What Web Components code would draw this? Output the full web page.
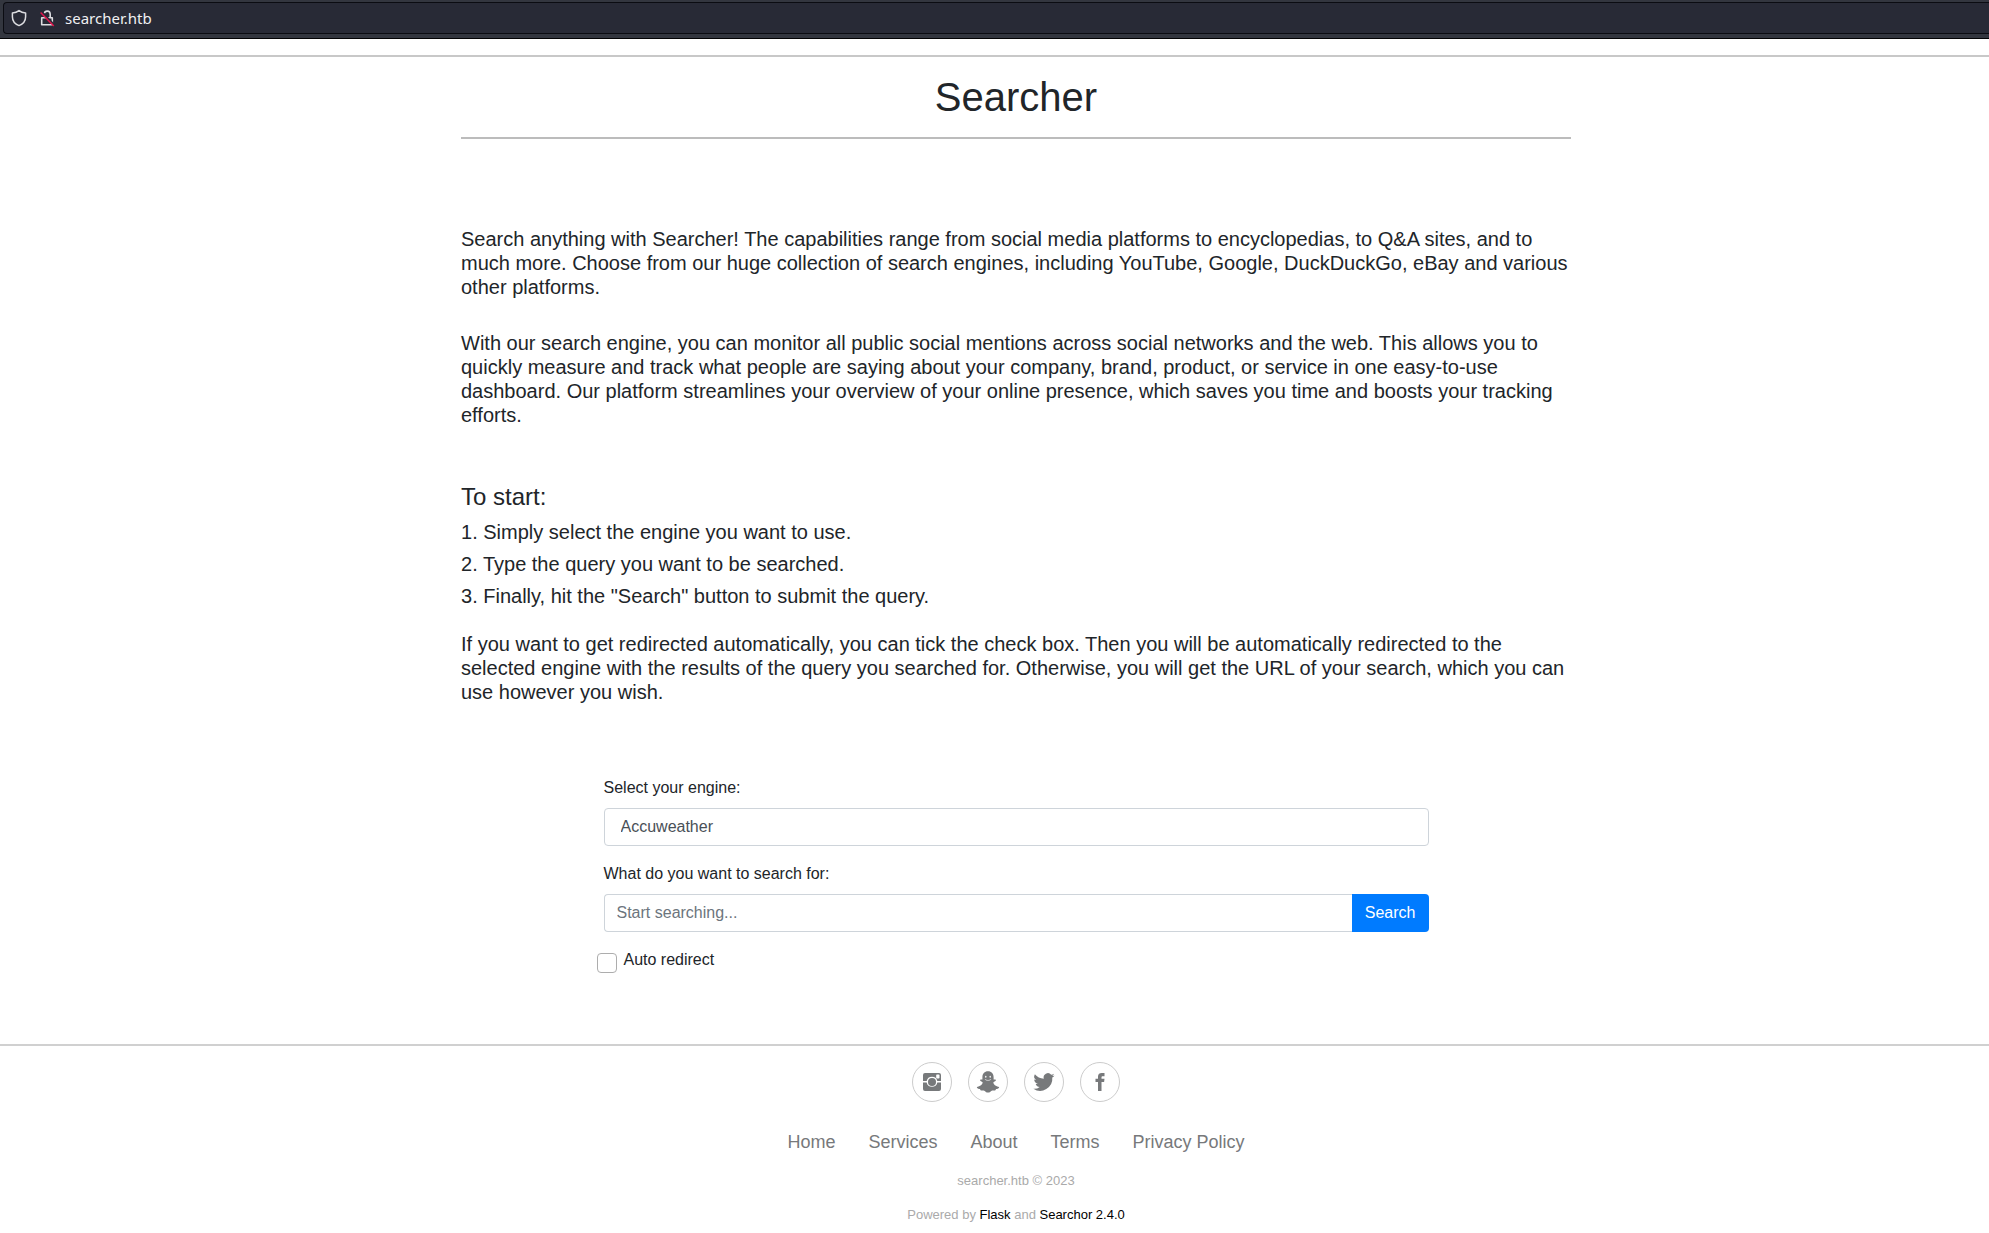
<!DOCTYPE html>
<html lang="en">
<head>
<meta charset="utf-8">
<title>Searcher</title>
<style>
  body { margin: 0; background: #fff; color: #212529; font: 16px/24px "Liberation Sans", Arial, sans-serif; }
</style>
</head>
<body>
<searcher-app></searcher-app>
<script>
class BaseElement extends HTMLElement {
  connectedCallback() {
    if (!this.shadowRoot) this.attachShadow({ mode: 'open' }).innerHTML =
      '<style>*{box-sizing:border-box}</style>' + this.render();
  }
}

customElements.define('address-bar', class extends BaseElement {
  render() { return `
    <style>
      :host { display: block; padding: 2px 0 4px 3px; background: #33363f; border-bottom: 1px solid #020204; }
      .field { display: flex; align-items: center; height: 32px; padding-left: 6px; background: #282a36;
        border: 1px solid #0b0c12; border-right: 0; border-radius: 4px 0 0 4px; }
      svg { flex: none; margin-right: 12px; }
      svg + svg { margin-right: 10px; }
      input { flex: 1; min-width: 0; padding: 0; border: 0; outline: 0; background: none; color: #f0f0f2;
        font: 15px/20px "Noto Sans", sans-serif; }
    </style>
    <div class="field">
      <svg width="18" height="18" viewBox="0 0 18 18" fill="none" stroke="#dcdce0" stroke-width="1.5" stroke-linejoin="round"><path d="M9 1.600C7.200 3 5 3.800 2.400 4v3.700c0 4 2.400 7.200 6.600 8.900 4.200-1.700 6.600-4.900 6.600-8.900V4C13 3.800 10.800 3 9 1.600z"/></svg>
      <svg width="15" height="18" viewBox="0 0 15 18" fill="none"><path d="M1.700 8.800h10.600v7H1.700zM10.200 8.500V5a3 3 0 0 0-5.900-.6" stroke="#dcdce0" stroke-width="1.600" stroke-linejoin="round"/><path d="M1.500 2.500l13 13.500" stroke="#282a36" stroke-width="1.800"/><path d="M.6 3.400l13.200 13.600" stroke="#e2134b" stroke-width="1.500"/></svg>
      <input type="text" value="searcher.htb" aria-label="Address">
    </div>`; }
});

customElements.define('intro-text', class extends BaseElement {
  render() { return `
    <style>
      :host { display: block; font-size: 20px; line-height: 24px; }
      h1 { margin: 0; padding: 16px 0; text-align: center; font-size: 40px; line-height: 48px; font-weight: 400;
        border-bottom: 2px solid #bcbcbc; }
      p { margin: 0 0 32px; }
      h1 + p { margin-top: 88px; }
      h2 { margin: 55px 0 9px; font-size: 24px; line-height: 29px; font-weight: 400; }
      ol { margin: 0 0 24px; padding: 0; display: grid; gap: 8px; counter-reset: step; }
      li { display: block; counter-increment: step; }
      li::before { content: counter(step) ". "; }
      p:last-child { margin: 0; }
    </style>
    <h1>Searcher</h1>
    <p>Search anything with Searcher! The capabilities range from social media platforms to encyclopedias, to Q&amp;A sites, and to much more. Choose from our huge collection of search engines, including YouTube, Google, DuckDuckGo, eBay and various other platforms.</p>
    <p>With our search engine, you can monitor all public social mentions across social networks and the web. This allows you to quickly measure and track what people are saying about your company, brand, product, or service in one easy-to-use dashboard. Our platform streamlines your overview of your online presence, which saves you time and boosts your tracking efforts.</p>
    <h2>To start:</h2>
    <ol>
      <li>Simply select the engine you want to use.</li>
      <li>Type the query you want to be searched.</li>
      <li>Finally, hit the "Search" button to submit the query.</li>
    </ol>
    <p>If you want to get redirected automatically, you can tick the check box. Then you will be automatically redirected to the selected engine with the results of the query you searched for. Otherwise, you will get the URL of your search, which you can use however you wish.</p>`; }
});

customElements.define('search-form', class extends BaseElement {
  render() { return `
    <style>
      :host { display: block; max-width: 825px; margin: 72px auto 0; }
      label { display: block; }
      select, input[type=text] { height: 38px; font: inherit; background: #fff; border: 1px solid #ced4da;
        border-radius: 4px; outline: 0; appearance: none; }
      select { display: block; width: 100%; margin: 8px 0 16px; padding: 0 16px; color: #495057; }
      input[type=text] { flex: 1; min-width: 0; padding: 0 12px; border-right: 0; border-radius: 4px 0 0 4px; color: #495057; }
      input::placeholder { color: #6c757d; opacity: 1; }
      .group { display: flex; margin: 8px 0 16px; }
      button { height: 38px; padding: 0 13px; border: 0; border-radius: 0 4px 4px 0; background: #007bff; color: #fff; font: inherit; }
      .check { display: flex; align-items: flex-start; gap: 7px; margin-left: -7px; }
      input[type=checkbox] { appearance: none; width: 20px; height: 20px; margin: 5px 0 0; background: #fff;
        border: 1px solid #adadad; border-radius: 4px; }
    </style>
    <form onsubmit="return false">
      <label for="engine">Select your engine:</label>
      <select id="engine"><option>Accuweather</option></select>
      <label for="query">What do you want to search for:</label>
      <div class="group"><input type="text" id="query" placeholder="Start searching..."><button>Search</button></div>
      <div class="check"><input type="checkbox" id="auto"><label for="auto">Auto redirect</label></div>
    </form>`; }
});

customElements.define('social-link', class extends BaseElement {
  render() { return `
    <style>
      :host { display: block; }
      a { display: grid; place-items: center; width: 40px; height: 40px; border: 1px solid #ccc; border-radius: 50%; color: #77797b; }
    </style>
    <a href="#" aria-label="${this.getAttribute('name')}"><slot></slot></a>`; }
});

customElements.define('site-footer', class extends BaseElement {
  render() { return `
    <style>
      :host { display: block; padding-top: 16px; text-align: center; }
      .social { display: flex; justify-content: center; gap: 16px; }
      svg { display: block; fill: #77797b; }
      nav { display: flex; justify-content: center; gap: 33px; margin: 27px 0 15px; font-size: 18px; line-height: 27px; }
      a { color: #77797b; text-decoration: none; }
      p { margin: 0 0 14px; font-size: 13px; line-height: 20px; color: #aaa; }
      p:last-child { margin: 0; }
      p a { color: #000; }
    </style>
    <div class="social">
      <social-link name="Instagram"><svg width="24" height="24" viewBox="0 0 24 24"><path fill-rule="evenodd" d="M5 3h14a2 2 0 0 1 2 2v6h-3.700a5.400 5.400 0 0 0-10.600 0H3V5a2 2 0 0 1 2-2zm12 1.500a.8.800 0 0 0-.8.800v2.400c0 .4.400.8.800.8h1.700c.4 0 .8-.4.800-.8V5.300a.8.800 0 0 0-.8-.8zM3 12.500h3.700a5.400 5.400 0 0 0 10.600 0H21V19a2 2 0 0 1-2 2H5a2 2 0 0 1-2-2z"/><circle cx="12" cy="12" r="4"/></svg></social-link>
      <social-link name="Snapchat"><svg width="24" height="24" viewBox="0 0 24 24"><path fill-rule="evenodd" d="M12 1.300c-3.500 0-5.600 2.500-5.600 5.700v2.400c-.8.300-2-.2-2.300.6-.3 1 1.800 1.400 2.500 2.300.3 1.900-2.600 4.300-5.800 4.600.2 1.500 1.800 1.900 3.200 2.100.3.700.3 1.400 1.100 1.500 1.100.2 2-.3 3.200.2 1.100.6 1.900 1.900 3.700 1.900s2.600-1.300 3.700-1.900c1.200-.5 2.100 0 3.200-.2.800-.1.800-.8 1.100-1.500 1.400-.2 3-.6 3.200-2.100-3.200-.3-6.100-2.700-5.800-4.600.7-.9 2.800-1.300 2.500-2.300-.3-.8-1.500-.3-2.300-.6V7c0-3.200-2.100-5.700-5.600-5.700zM9.800 5.700a.7 1 0 1 1 0 2 .7 1 0 0 1 0-2zm4.400 0a.7 1 0 1 1 0 2 .7 1 0 0 1 0-2zM8.700 8.900c2 1.500 4.600 1.500 6.600 0-.8 2.200-5.800 2.200-6.600 0z"/></svg></social-link>
      <social-link name="Twitter"><svg width="24" height="24" viewBox="0 0 24 24"><path d="M22.500 5.400c-.8.300-1.600.6-2.500.7.900-.5 1.600-1.400 1.900-2.400-.8.500-1.800.9-2.700 1a4.300 4.300 0 0 0-7.400 4C8.200 8.500 5 6.800 2.900 4.200a4.300 4.300 0 0 0 1.300 5.800c-.7 0-1.400-.2-2-.5 0 2.100 1.500 3.900 3.500 4.300-.6.200-1.300.2-2 .1.600 1.700 2.200 3 4 3A8.700 8.700 0 0 1 1.400 18.700 12.200 12.200 0 0 0 20.300 7.600c.9-.6 1.600-1.400 2.200-2.200z"/></svg></social-link>
      <social-link name="Facebook"><svg width="24" height="24" viewBox="0 0 24 24"><path d="M10 21v-9H7.500V8.700H10V6.500C10 4 11.600 3 13.700 3H16.500v3.200h-1.800c-.9 0-1.200.4-1.200 1.100v1.400h3l-.4 3.300h-2.600v9z"/></svg></social-link>
    </div>
    <nav><a href="#">Home</a><a href="#">Services</a><a href="#">About</a><a href="#">Terms</a><a href="#">Privacy Policy</a></nav>
    <p>searcher.htb © 2023</p>
    <p>Powered by <a href="#">Flask</a> and <a href="#">Searchor 2.4.0</a></p>`; }
});

customElements.define('searcher-app', class extends BaseElement {
  render() { return `
    <style>
      :host { display: block; }
      hr { margin: 0; border: 0; height: 2px; background: #c8c8c8; }
      .top { margin-top: 16px; }
      .page { padding-left: 43px; }
      main { max-width: 1110px; margin: 0 auto; }
      .bottom { margin-top: 71px; background: #d0d0d0; }
    </style>
    <address-bar></address-bar>
    <hr class="top">
    <div class="page"><main><intro-text></intro-text><search-form></search-form></main></div>
    <hr class="bottom">
    <div class="page"><site-footer></site-footer></div>`; }
});
</script>
</body>
</html>
